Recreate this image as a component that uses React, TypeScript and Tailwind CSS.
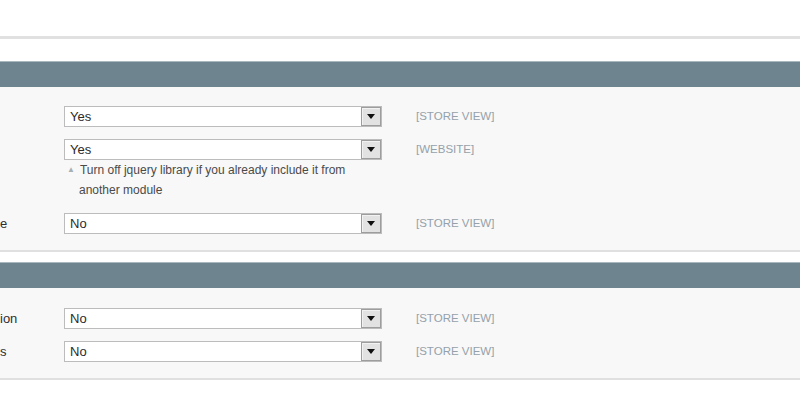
import React from "react";

function Select({ value }: { value: string }) {
  return (
    <div className="flex h-[21px] w-[318px] items-stretch border border-[#bcbcbc] bg-white">
      <div className="flex flex-1 items-center pl-[5px] text-[13px] text-[#2b2b2b]">{value}</div>
      <div className="flex w-[20px] items-center justify-center border border-[#9d9d9d] bg-[#e2e2e2] shadow-[inset_1px_1px_0_#f2f2f2]">
        <svg width="8" height="5" viewBox="0 0 8 5">
          <polygon points="0,0 8,0 4,5" fill="#111" />
        </svg>
      </div>
    </div>
  );
}

function Row({
  label,
  value,
  scope,
  note,
}: {
  label: string;
  value: string;
  scope: string;
  note?: string[];
}) {
  return (
    <div className="flex items-start">
      <div className="flex h-[21px] w-[64px] items-center text-[13px] text-[#2f2f2f]">{label}</div>
      <div className="flex flex-col">
        <Select value={value} />
        {note && (
          <div className="pl-[3px] pb-[1px] text-[12px] leading-[20px] text-[#4a4a4a]">
            <div className="flex items-center">
              <span className="mr-[5px] text-[8px] text-[#a9b0b4]">▲</span>
              <span>{note[0]}</span>
            </div>
            <div className="pl-[12px]">{note[1]}</div>
          </div>
        )}
      </div>
      <div className="ml-[34px] h-[21px] text-[11.5px] leading-[20px] text-[#95a1aa]">{scope}</div>
    </div>
  );
}

function Header() {
  return <div className="h-[26px] border-t border-[#a9b8be] bg-[#6e8590]" />;
}

export default function App() {
  return (
    <div className="h-[400px] w-[800px] overflow-hidden bg-white font-['Liberation_Sans',Arial,sans-serif]">
      <div className="h-[36px]" />
      <div className="h-[3px] bg-[#e1e1e1]" />
      <div className="h-[22px]" />
      <Header />
      <div className="flex flex-col gap-[12px] border-b-2 border-[#e0e0e0] bg-[#f8f8f8] pt-[19px] pb-[16px]">
        <Row label="" value="Yes" scope="[STORE VIEW]" />
        <Row
          label=""
          value="Yes"
          scope="[WEBSITE]"
          note={["Turn off jquery library if you already include it from", "another module"]}
        />
        <Row label="e" value="No" scope="[STORE VIEW]" />
      </div>
      <div className="h-[10px]" />
      <Header />
      <div className="flex flex-col gap-[12px] border-b-2 border-[#e0e0e0] bg-[#f8f8f8] pt-[20px] pb-[16px]">
        <Row label="ion" value="No" scope="[STORE VIEW]" />
        <Row label="s" value="No" scope="[STORE VIEW]" />
      </div>
    </div>
  );
}
